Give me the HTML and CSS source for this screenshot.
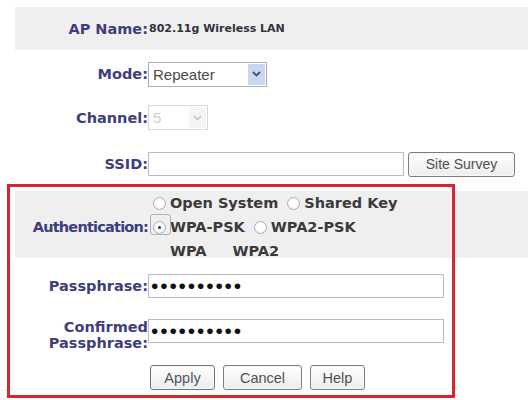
FILE: index.html
```html
<!DOCTYPE html>
<html lang="en">
<head>
<meta charset="utf-8">
<title>Wireless Settings</title>
<link rel="stylesheet" href="styles.css">
</head>
<body>
<div class="page">
  <div class="form">
    <div class="row row-ap shaded">
      <div class="label">AP Name:</div>
      <div class="field"><span class="ap-value">802.11g Wireless LAN</span></div>
    </div>
    <div class="row row-mode">
      <div class="label">Mode:</div>
      <div class="field">
        <div class="select select-mode">
          <span class="select-text">Repeater</span>
          <span class="select-arrow"><svg width="9" height="6" viewBox="0 0 9 6"><path d="M1 1 L4.5 4.5 L8 1" fill="none" stroke="#3b4f8c" stroke-width="1.8"/></svg></span>
        </div>
      </div>
    </div>
    <div class="row row-channel">
      <div class="label">Channel:</div>
      <div class="field">
        <div class="select select-channel">
          <span class="select-text">5</span>
          <span class="select-arrow"><svg width="9" height="6" viewBox="0 0 9 6"><path d="M1 1 L4.5 4.5 L8 1" fill="none" stroke="#c4c4c4" stroke-width="1.6"/></svg></span>
        </div>
      </div>
    </div>
    <div class="row row-ssid">
      <div class="label">SSID:</div>
      <div class="field field-ssid">
        <input class="text-input ssid-input" type="text" value="">
        <button class="btn btn-survey" type="button">Site Survey</button>
      </div>
    </div>
    <div class="row row-auth shaded">
      <div class="label label-auth">Authentication:</div>
      <div class="field radios">
        <div class="radio-line">
          <label class="opt"><input type="radio" name="auth"><span>Open System</span></label>
          <label class="opt"><input type="radio" name="auth"><span>Shared Key</span></label>
        </div>
        <div class="radio-line">
          <label class="opt opt-focus"><input type="radio" name="auth" checked><span>WPA-PSK</span></label>
          <label class="opt"><input type="radio" name="auth"><span>WPA2-PSK</span></label>
        </div>
        <div class="radio-line">
          <label class="opt opt-hidden"><input type="radio" name="auth"><span>WPA</span></label>
          <label class="opt opt-hidden"><input type="radio" name="auth"><span>WPA2</span></label>
        </div>
      </div>
    </div>
    <div class="row row-pass">
      <div class="label">Passphrase:</div>
      <div class="field"><input class="text-input pass-input" type="password" value="abcdefghij"></div>
    </div>
    <div class="row row-confirm">
      <div class="label label-confirm">Confirmed<br>Passphrase:</div>
      <div class="field field-confirm"><input class="text-input pass-input" type="password" value="abcdefghij"></div>
    </div>
    <div class="row row-buttons">
      <div class="label"></div>
      <div class="field buttons">
        <button class="btn btn-apply" type="button">Apply</button>
        <button class="btn btn-cancel" type="button">Cancel</button>
        <button class="btn btn-help" type="button">Help</button>
      </div>
    </div>
  </div>
  <div class="highlight"></div>
</div>
</body>
</html>
```
FILE: styles.css
```css
html, body {
  margin: 0;
  padding: 0;
  background: #ffffff;
}

.page {
  position: relative;
  width: 528px;
  height: 400px;
  overflow: hidden;
}

.form {
  margin-left: 15px;
  padding-top: 7px;
  width: 513px;
}

.row {
  display: grid;
  grid-template-columns: 133px 1fr;
  align-items: center;
}

.shaded {
  background: #efefef;
}

.label {
  text-align: right;
  font-family: "DejaVu Sans", Verdana, sans-serif;
  font-weight: bold;
  font-size: 14.5px;
  color: #3e3e7c;
  white-space: nowrap;
}

.field {
  display: flex;
  align-items: center;
}

.row-ap { height: 43px; }
.row-mode { height: 48px; }
.row-channel { height: 39px; }
.row-ssid { height: 54px; }
.row-auth { height: 67px; align-items: start; }
.row-pass { height: 55px; }
.row-confirm { height: 36px; align-items: start; }
.row-buttons { height: 25px; margin-top: 16px; }

.ap-value {
  font-family: "DejaVu Sans", Verdana, sans-serif;
  font-weight: bold;
  font-size: 11px;
  color: #333338;
  margin-left: 1px;
}

/* select boxes */
.select {
  box-sizing: border-box;
  display: flex;
  align-items: stretch;
  height: 25px;
  border: 1px solid #a9b0bd;
  background: #ffffff;
}
.select-mode { width: 119px; }
.select-channel {
  width: 60px;
  border-color: #d8d8d8;
}
.select-text {
  flex: 1;
  display: flex;
  align-items: center;
  padding-left: 4px;
  font-family: "Liberation Sans", Arial, sans-serif;
  font-size: 15px;
  color: #4a4a4a;
}
.select-channel .select-text { color: #cfcfcf; }
.select-arrow {
  width: 17px;
  display: flex;
  align-items: center;
  justify-content: center;
  background: #cbd6f0;
  margin: 1px;
}
.select-channel .select-arrow { background: #f4f4f4; }

/* text inputs */
.text-input {
  box-sizing: border-box;
  height: 24px;
  border: 1px solid #b9bcc6;
  background: #ffffff;
  margin: 0;
  padding: 0 2px;
  outline: none;
}
.ssid-input { width: 256px; }
.pass-input {
  width: 296px;
  height: 24px;
  font-family: "Liberation Sans", Arial, sans-serif;
  font-size: 21px;
  line-height: 20px;
  color: #111111;
  letter-spacing: 1.85px;
}

.field-ssid { gap: 4px; }
.field-confirm { padding-top: 6px; }

/* buttons */
.btn {
  box-sizing: border-box;
  height: 25px;
  margin: 0;
  padding: 0;
  border: 1px solid #7d7d7d;
  border-radius: 3px;
  background: linear-gradient(#ffffff, #ededed);
  font-family: "Liberation Sans", Arial, sans-serif;
  font-size: 14.5px;
  color: #505050;
  box-shadow: inset 0 0 0 1px #f7f7f7;
}
.btn-survey { width: 107px; font-size: 14px; }
.buttons { padding-left: 2px; gap: 8px; }
.btn-apply { width: 65px; border-color: #6d7588; color: #4f5666; }
.btn-cancel { width: 79px; }
.btn-help { width: 55px; }

/* authentication radios */
.label-auth {
  letter-spacing: -0.8px;
  line-height: 24px;
  padding-top: 24px;
}
.radios {
  flex-direction: column;
  align-items: flex-start;
  padding-left: 5px;
}
.radio-line {
  display: flex;
  align-items: center;
  height: 24px;
  gap: 9px;
}
.opt {
  display: flex;
  align-items: center;
  font-family: "DejaVu Sans", Verdana, sans-serif;
  font-weight: bold;
  font-size: 14.5px;
  color: #3a3a3a;
  position: relative;
}
.opt input {
  appearance: none;
  -webkit-appearance: none;
  box-sizing: border-box;
  width: 13px;
  height: 13px;
  margin: 0 4px 0 0;
  border: 1px solid #a7afc0;
  border-radius: 50%;
  background: radial-gradient(circle at 50% 40%, #ffffff 40%, #e6e9ef 100%);
  display: grid;
  place-items: center;
}
.opt input:checked::after {
  content: "";
  width: 3px;
  height: 3px;
  border-radius: 50%;
  background: #2c3346;
}
.opt-focus::before {
  content: "";
  position: absolute;
  left: -3px;
  top: -5px;
  width: 19px;
  height: 19px;
  border: 1px solid #b0b0b0;
  border-radius: 3px;
}
.opt-hidden input {
  border-color: transparent;
  background: transparent;
}

.label-confirm {
  line-height: 16px;
  padding-top: 6px;
}

/* red annotation frame */
.highlight {
  position: absolute;
  left: 7px;
  top: 184px;
  width: 448px;
  height: 214px;
  box-sizing: border-box;
  border: 3px solid #d7262a;
  pointer-events: none;
}
```
